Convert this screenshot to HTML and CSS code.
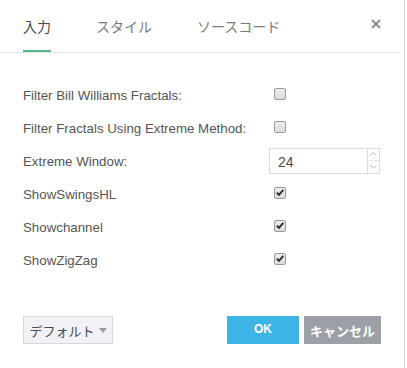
FILE: index.html
```html
<!DOCTYPE html>
<html>
<head>
<meta charset="utf-8">
<link rel="stylesheet" href="styles.css">
</head>
<body>
<div class="dialog">
  <div class="header">
    <div class="tabs">
      <div class="tab active">入力</div>
      <div class="tab">スタイル</div>
      <div class="tab">ソースコード</div>
    </div>
    <svg class="close" width="10" height="10" viewBox="0 0 10 10"><path d="M1 1L9 9M9 1L1 9" stroke="#8c8c8c" stroke-width="2"/></svg>
  </div>
  <div class="content">
    <div class="row"><div class="label">Filter Bill Williams Fractals:</div><div class="ctl"><span class="cb"></span></div></div>
    <div class="row"><div class="label">Filter Fractals Using Extreme Method:</div><div class="ctl"><span class="cb"></span></div></div>
    <div class="row"><div class="label">Extreme Window:</div><div class="ctl">
      <div class="num"><span class="val">24</span><div class="spin">
        <div class="arr"><svg width="7" height="4" viewBox="0 0 7 4"><path d="M0.5 3.5L3.5 0.5L6.5 3.5" fill="none" stroke="#b8bcc4" stroke-width="1"/></svg></div>
        <div class="arr"><svg width="7" height="4" viewBox="0 0 7 4"><path d="M0.5 0.5L3.5 3.5L6.5 0.5" fill="none" stroke="#b8bcc4" stroke-width="1"/></svg></div>
      </div></div>
    </div></div>
    <div class="row"><div class="label">ShowSwingsHL</div><div class="ctl"><span class="cb on"><svg width="8" height="7" viewBox="0 0 8 7"><path d="M0.8 3.6L3 5.8L7.3 0.8" fill="none" stroke="#2f2f2f" stroke-width="2"/></svg></span></div></div>
    <div class="row"><div class="label">Showchannel</div><div class="ctl"><span class="cb on"><svg width="8" height="7" viewBox="0 0 8 7"><path d="M0.8 3.6L3 5.8L7.3 0.8" fill="none" stroke="#2f2f2f" stroke-width="2"/></svg></span></div></div>
    <div class="row"><div class="label">ShowZigZag</div><div class="ctl"><span class="cb on"><svg width="8" height="7" viewBox="0 0 8 7"><path d="M0.8 3.6L3 5.8L7.3 0.8" fill="none" stroke="#2f2f2f" stroke-width="2"/></svg></span></div></div>
  </div>
  <div class="footer">
    <div class="default">デフォルト <span class="caret"></span></div>
    <div class="actions">
      <div class="btn ok">OK</div>
      <div class="btn cancel">キャンセル</div>
    </div>
  </div>
</div>
</body>
</html>
```
FILE: styles.css
```css
html, body {
  margin: 0;
  padding: 0;
  background: #ffffff;
}
body {
  font-family: "Liberation Sans", "Noto Sans CJK JP", sans-serif;
  color: #4a4a4a;
}
.dialog {
  width: 404px;
  height: 368px;
  border-right: 1px solid #d4d4d4;
  display: flex;
  flex-direction: column;
}
.header {
  height: 52px;
  border-bottom: 1px solid #e0e3eb;
  display: flex;
  justify-content: space-between;
  align-items: flex-start;
  padding: 0 19px 0 23px;
  margin-right: 4px;
}
.tabs {
  display: flex;
  gap: 45px;
  height: 52px;
}
.tab {
  font-family: "Noto Sans CJK JP", sans-serif;
  font-size: 14px;
  color: #7a7a7a;
  padding-top: 15px;
  box-sizing: border-box;
  height: 52px;
  line-height: 22px;
}
.tab.active {
  color: #4a4a4a;
  border-bottom: 2px solid #53b987;
}
.close {
  margin-top: 19px;
}
.content {
  padding-top: 25px;
  display: flex;
  flex-direction: column;
}
.row {
  display: grid;
  grid-template-columns: 246px auto;
  height: 33px;
  align-items: center;
  padding-left: 23px;
}
.label {
  font-size: 13.3px;
  color: #555555;
  padding-top: 2px;
}
.ctl {
  display: flex;
  align-items: center;
}
.cb {
  margin-left: 5px;
  margin-top: -2px;
  width: 10px;
  height: 10px;
  border: 1px solid #9b9b9b;
  border-radius: 2px;
  background: linear-gradient(#ececec, #dcdcdc);
  display: flex;
  align-items: center;
  justify-content: center;
}
.num {
  width: 109px;
  height: 24px;
  border: 1px solid #d8dbe0;
  display: flex;
  justify-content: space-between;
}
.val {
  font-size: 14px;
  padding-left: 8px;
  line-height: 26px;
  color: #4a4a4a;
}
.spin {
  width: 11px;
  border-left: 1px solid #d8dbe0;
  display: flex;
  flex-direction: column;
}
.arr {
  flex: 1;
  display: flex;
  align-items: center;
  justify-content: center;
}
.arr + .arr {
  border-top: 1px solid #e3e5ea;
}
.footer {
  margin-top: 40px;
  padding: 0 23px;
  display: flex;
  justify-content: space-between;
}
.default {
  width: 88px;
  height: 26px;
  border: 1px solid #d6d8dd;
  background: #f1f2f6;
  font-family: "Noto Sans CJK JP", sans-serif;
  font-size: 13px;
  color: #4a4a4a;
  display: flex;
  align-items: center;
  justify-content: center;
  gap: 4px;
}
.caret {
  width: 0;
  height: 0;
  border-left: 4.5px solid transparent;
  border-right: 4.5px solid transparent;
  border-top: 5px solid #9a9a9a;
}
.actions {
  display: flex;
  gap: 5px;
}
.btn {
  height: 28px;
  display: flex;
  align-items: center;
  justify-content: center;
  color: #ffffff;
  font-weight: bold;
  font-family: "Noto Sans CJK JP", sans-serif;
  font-size: 13px;
}
.ok {
  width: 72px;
  background: #3cb4e5;
  font-family: "Liberation Sans", sans-serif;
  font-size: 12px;
  padding-bottom: 3px;
  box-sizing: border-box;
}
.cancel {
  width: 77px;
  background: #9c9fa6;
}
```
